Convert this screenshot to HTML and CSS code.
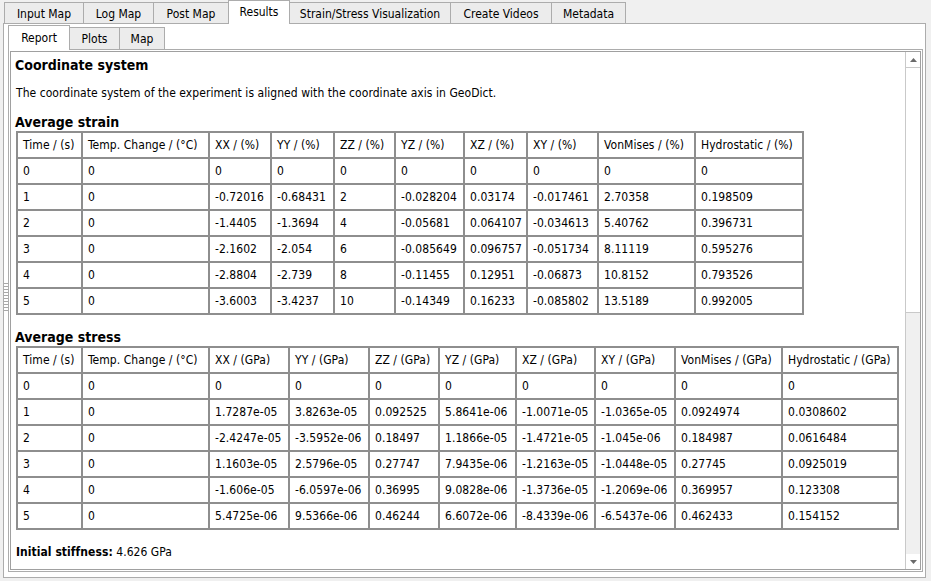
FILE: index.html
```html
<!DOCTYPE html>
<html lang="en">
<head>
    <meta charset="UTF-8">
    <title>Results - Report</title>
    <link rel="stylesheet" href="styles.css">
</head>
<body>
    <div class="window">
        <div class="tabbar tabbar-main">
            <div class="tab w-input">Input Map</div>
            <div class="tab w-log">Log Map</div>
            <div class="tab w-post">Post Map</div>
            <div class="tab tab-active w-results">Results</div>
            <div class="tab w-strain">Strain/Stress Visualization</div>
            <div class="tab w-videos">Create Videos</div>
            <div class="tab w-meta">Metadata</div>
        </div>

        <div class="pane pane-main">
            <div class="tabbar tabbar-sub">
                <div class="tab tab-active w-report">Report</div>
                <div class="tab w-plots">Plots</div>
                <div class="tab w-map">Map</div>
            </div>

            <div class="pane pane-sub">
                <div class="scroll-area">
                    <div class="report">
                        <h2>Coordinate system</h2>
                        <p>The coordinate system of the experiment is aligned with the coordinate axis in GeoDict.</p>

                        <h2>Average strain</h2>
                        <table class="data strain">
                            <tr><th>Time / (s)</th><th>Temp. Change / (°C)</th><th>XX / (%)</th><th>YY / (%)</th><th>ZZ / (%)</th><th>YZ / (%)</th><th>XZ / (%)</th><th>XY / (%)</th><th>VonMises / (%)</th><th>Hydrostatic / (%)</th></tr>
                            <tr><td>0</td><td>0</td><td>0</td><td>0</td><td>0</td><td>0</td><td>0</td><td>0</td><td>0</td><td>0</td></tr>
                            <tr><td>1</td><td>0</td><td>-0.72016</td><td>-0.68431</td><td>2</td><td>-0.028204</td><td>0.03174</td><td>-0.017461</td><td>2.70358</td><td>0.198509</td></tr>
                            <tr><td>2</td><td>0</td><td>-1.4405</td><td>-1.3694</td><td>4</td><td>-0.05681</td><td>0.064107</td><td>-0.034613</td><td>5.40762</td><td>0.396731</td></tr>
                            <tr><td>3</td><td>0</td><td>-2.1602</td><td>-2.054</td><td>6</td><td>-0.085649</td><td>0.096757</td><td>-0.051734</td><td>8.11119</td><td>0.595276</td></tr>
                            <tr><td>4</td><td>0</td><td>-2.8804</td><td>-2.739</td><td>8</td><td>-0.11455</td><td>0.12951</td><td>-0.06873</td><td>10.8152</td><td>0.793526</td></tr>
                            <tr><td>5</td><td>0</td><td>-3.6003</td><td>-3.4237</td><td>10</td><td>-0.14349</td><td>0.16233</td><td>-0.085802</td><td>13.5189</td><td>0.992005</td></tr>
                        </table>

                        <h2 class="after-table">Average stress</h2>
                        <table class="data stress">
                            <tr><th>Time / (s)</th><th>Temp. Change / (°C)</th><th>XX / (GPa)</th><th>YY / (GPa)</th><th>ZZ / (GPa)</th><th>YZ / (GPa)</th><th>XZ / (GPa)</th><th>XY / (GPa)</th><th>VonMises / (GPa)</th><th>Hydrostatic / (GPa)</th></tr>
                            <tr><td>0</td><td>0</td><td>0</td><td>0</td><td>0</td><td>0</td><td>0</td><td>0</td><td>0</td><td>0</td></tr>
                            <tr><td>1</td><td>0</td><td>1.7287e-05</td><td>3.8263e-05</td><td>0.092525</td><td>5.8641e-06</td><td>-1.0071e-05</td><td>-1.0365e-05</td><td>0.0924974</td><td>0.0308602</td></tr>
                            <tr><td>2</td><td>0</td><td>-2.4247e-05</td><td>-3.5952e-06</td><td>0.18497</td><td>1.1866e-05</td><td>-1.4721e-05</td><td>-1.045e-06</td><td>0.184987</td><td>0.0616484</td></tr>
                            <tr><td>3</td><td>0</td><td>1.1603e-05</td><td>2.5796e-05</td><td>0.27747</td><td>7.9435e-06</td><td>-1.2163e-05</td><td>-1.0448e-05</td><td>0.27745</td><td>0.0925019</td></tr>
                            <tr><td>4</td><td>0</td><td>-1.606e-05</td><td>-6.0597e-06</td><td>0.36995</td><td>9.0828e-06</td><td>-1.3736e-05</td><td>-1.2069e-06</td><td>0.369957</td><td>0.123308</td></tr>
                            <tr><td>5</td><td>0</td><td>5.4725e-06</td><td>9.5366e-06</td><td>0.46244</td><td>6.6072e-06</td><td>-8.4339e-06</td><td>-6.5437e-06</td><td>0.462433</td><td>0.154152</td></tr>
                        </table>

                        <div class="stiffness"><b>Initial stiffness:</b> 4.626 GPa</div>
                    </div>

                    <div class="vscroll">
                        <div class="sb-btn">
                            <svg width="7" height="4" viewBox="0 0 7 4"><polygon points="0,4 3.5,0 7,4" fill="#6a6a6a"/></svg>
                        </div>
                        <div class="sb-thumb"></div>
                        <div class="sb-track"></div>
                        <div class="sb-btn">
                            <svg width="7" height="4" viewBox="0 0 7 4"><polygon points="0,0 7,0 3.5,4" fill="#6a6a6a"/></svg>
                        </div>
                    </div>
                </div>
            </div>
        </div>

        <div class="splitter-grip"></div>
    </div>
</body>
</html>
```

FILE: styles.css
```css
body {
    margin: 0;
    background: #f0f0f0;
    font-family: 'DejaVu Sans Condensed', 'DejaVu Sans', sans-serif;
    font-size: 12px;
    letter-spacing: 0.05px;
    color: #000;
    overflow: hidden;
}

.window {
    position: relative;
    width: 931px;
    height: 581px;
}

/* tab bars */
.tabbar {
    display: flex;
    align-items: flex-end;
    position: relative;
    z-index: 1;
}

.tabbar-main {
    height: 23px;
    padding-left: 4px;
}

.tabbar-sub {
    height: 24px;
}

.tab {
    box-sizing: border-box;
    height: 21px;
    border: 1px solid #acacac;
    border-bottom: none;
    margin-left: -1px;
    background: #ececec;
    display: flex;
    align-items: center;
    justify-content: center;
    font-size: 12px;
    letter-spacing: 0;
    white-space: nowrap;
    padding-top: 1px;
}

.tab:first-child {
    margin-left: 0;
}

.tabbar-sub .tab {
    height: 22px;
}

.tab-active,
.tabbar-sub .tab-active {
    background: #fff;
    margin-bottom: -1px;
    position: relative;
    z-index: 2;
}

.tabbar-main .tab-active {
    height: 24px;
    padding-bottom: 2px;
}

.tabbar-sub .tab-active {
    height: 25px;
    padding-bottom: 2px;
}

.w-input { width: 80px; }
.w-log { width: 71px; }
.w-post { width: 76px; }
.w-results { width: 62px; }
.w-strain { width: 162px; }
.w-videos { width: 102px; }
.w-meta { width: 75px; }

.w-report { width: 62px; }
.w-plots { width: 51px; }
.w-map { width: 46px; }

/* panes */
.pane {
    box-sizing: border-box;
    border: 1px solid #acacac;
    background: #fff;
}

.pane-main {
    margin-left: 3px;
    width: 923px;
    height: 555px;
    padding: 1px 2px 5px 4px;
    display: flex;
    flex-direction: column;
}

.pane-sub {
    flex: 1;
    padding: 1px;
    display: flex;
}

.scroll-area {
    flex: 1;
    display: flex;
    border: 1px solid #a0a0a0;
    overflow: hidden;
}

/* report content */
.report {
    flex: 1;
    padding: 4px 0 0 5px;
    overflow: hidden;
}

h2 {
    margin: 0;
    font-size: 14px;
    line-height: 18px;
    font-weight: bold;
    letter-spacing: 0;
    margin-left: -1px;
}

p {
    margin: 11px 0 12px;
    line-height: 16px;
}

h2.after-table {
    margin-top: 13px;
}

.data {
    border-collapse: separate;
    border-spacing: 0;
    table-layout: fixed;
    border-left: 2px solid #8e8e8e;
    border-top: 2px solid #8e8e8e;
}

.data th,
.data td {
    box-sizing: border-box;
    height: 26px;
    padding: 0 0 0 5px;
    border-right: 2px solid #8e8e8e;
    border-bottom: 2px solid #8e8e8e;
    text-align: left;
    font-weight: normal;
    white-space: nowrap;
    overflow: hidden;
}

.strain { width: 788px; }
.strain th:nth-child(1) { width: 65px; }
.strain th:nth-child(2) { width: 127px; }
.strain th:nth-child(3) { width: 62px; }
.strain th:nth-child(4) { width: 63px; }
.strain th:nth-child(5) { width: 61px; }
.strain th:nth-child(6) { width: 69px; }
.strain th:nth-child(7) { width: 63px; }
.strain th:nth-child(8) { width: 71px; }
.strain th:nth-child(9) { width: 97px; }
.strain th:nth-child(10) { width: 108px; }

.stress { width: 883px; }
.stress th:nth-child(1) { width: 65px; }
.stress th:nth-child(2) { width: 127px; }
.stress th:nth-child(3) { width: 80px; }
.stress th:nth-child(4) { width: 80px; }
.stress th:nth-child(5) { width: 70px; }
.stress th:nth-child(6) { width: 77px; }
.stress th:nth-child(7) { width: 79px; }
.stress th:nth-child(8) { width: 80px; }
.stress th:nth-child(9) { width: 107px; }
.stress th:nth-child(10) { width: 116px; }

.stiffness {
    margin-top: 14px;
    line-height: 16px;
}

/* scrollbar */
.vscroll {
    width: 14px;
    border-left: 1px solid #c9c9c9;
    background: #f0f0f0;
    display: flex;
    flex-direction: column;
}

.sb-btn {
    height: 15px;
    background: #fff;
    display: flex;
    align-items: center;
    justify-content: center;
}

.sb-thumb {
    height: 244px;
    background: #fff;
    border-top: 1px solid #c9c9c9;
    border-bottom: 1px solid #c9c9c9;
}

.sb-track {
    flex: 1;
}

.splitter-grip {
    position: absolute;
    left: 4px;
    top: 283px;
    width: 4px;
    height: 30px;
    background: repeating-linear-gradient(to bottom, #a8a8a8 0, #a8a8a8 1px, transparent 1px, transparent 3px);
    z-index: 3;
}
```
